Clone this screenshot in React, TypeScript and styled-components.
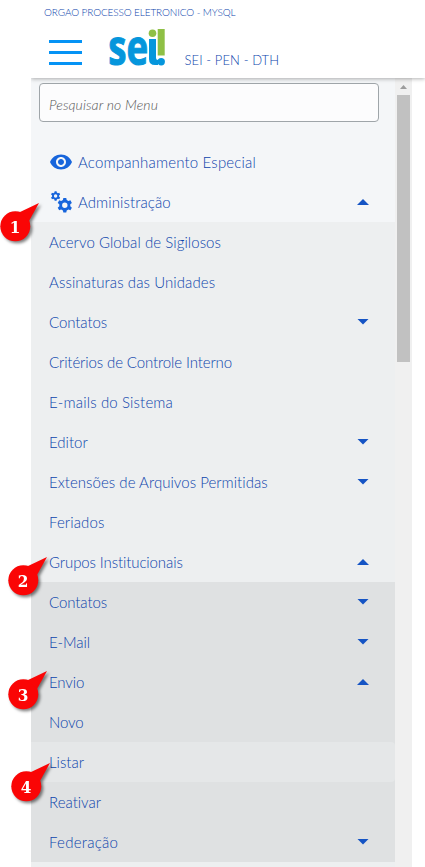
import React from "react";
import styled, { createGlobalStyle } from "styled-components";

const GlobalStyle = createGlobalStyle`
  *, *::before, *::after { box-sizing: border-box; }
  body { margin: 0; background: #fff; overflow: hidden; }
`;

const Page = styled.div`
  position: relative;
  display: flex;
  flex-direction: column;
  width: 425px;
  height: 867px;
  overflow: hidden;
  background: #fff;
  color: #0c44ac;
  font-family: Lato, "Open Sans", sans-serif;
  font-weight: 300;
  font-variant-ligatures: none;
`;

const Header = styled.header`
  position: relative;
  z-index: 1;
  flex: none;
  height: 78px;
  margin-left: 31px;
  padding: 5px 0 0 13px;
  background: #fff;
  box-shadow: 0 1px 4px rgba(0, 0, 0, 0.3);
  clip-path: inset(0 0 -6px 0);
`;

const Organization = styled.div`
  height: 14px;
  font-size: 10px;
  line-height: 14px;
  letter-spacing: -0.12px;
  white-space: nowrap;
`;

const Brand = styled.div`
  display: flex;
  align-items: flex-start;
  padding-left: 5px;
`;

const MenuButton = styled.button`
  display: flex;
  flex-direction: column;
  gap: 8px;
  width: 33px;
  margin-top: 21px;
  padding: 0;
  border: 0;
  background: none;

  span {
    height: 3px;
    background: #0593f5;
  }
`;

const Logo = styled.svg`
  width: 58px;
  height: 70px;
  margin: -7px 0 -14px 27px;
`;

const Unit = styled.span`
  margin: 32px 0 0 17.5px;
  font-size: 13px;
  line-height: 18px;
  letter-spacing: 0.1px;
  white-space: nowrap;
`;

const Body = styled.div`
  display: flex;
  flex: 1;
  min-height: 0;
  width: 381px;
  margin-left: 31px;
`;

const Sidebar = styled.nav`
  width: 364px;
  padding-top: 5px;
  background: #f4f6f8;
`;

const Search = styled.input`
  display: block;
  width: 340px;
  height: 39px;
  margin: 0 0 20px 8px;
  padding: 3px 9px 0;
  border: 1px solid #9fa5a9;
  border-radius: 4px;
  background: #fcfcfd;
  font: italic 300 14px Lato, sans-serif;
  letter-spacing: 0.1px;

  &::placeholder {
    color: #555;
    opacity: 1;
  }
`;

const SubMenu = styled.div<{ $level: 1 | 2 }>`
  background: ${({ $level }) => ($level === 1 ? "#edeff0" : "#dfe1e2")};
  ${({ $level }) => $level === 1 && "padding-bottom: 5px;"}
`;

const Item = styled.div<{ $active?: boolean }>`
  display: flex;
  align-items: center;
  height: 40px;
  padding: 0 26px 1px 18px;
  border-radius: ${({ $active }) => ($active ? "0 4px 4px 0" : "0")};
  background: ${({ $active }) => ($active ? "#e5e7e8" : "transparent")};
`;

const Label = styled.span<{ $spacing: number }>`
  flex: 1;
  font-size: 15px;
  line-height: 20px;
  letter-spacing: ${({ $spacing }) => $spacing}px;
  white-space: nowrap;
`;

const ItemIcon = styled.svg`
  flex: none;
  width: 24px;
  height: 24px;
  margin-right: 5px;
  fill: #1765dc;
`;

const Caret = styled.span<{ $open: boolean }>`
  width: 12px;
  height: 6px;
  margin-top: ${({ $open }) => ($open ? "1px" : "0")};
  background: #1554c4;
  clip-path: ${({ $open }) =>
    $open ? "polygon(50% 0, 100% 100%, 0 100%)" : "polygon(0 0, 100% 0, 50% 100%)"};
`;

const Scrollbar = styled.div`
  display: flex;
  flex-direction: column;
  align-items: center;
  width: 17px;
  background: #f0f0f0;
`;

const ScrollArrow = styled.div`
  width: 7px;
  height: 4px;
  margin: 7px 0 6px;
  background: #9c9c9c;
  clip-path: polygon(50% 0, 100% 100%, 0 100%);
`;

const ScrollThumb = styled.div`
  width: 13px;
  height: 267px;
  background: #c1c1c1;
`;

const Pin = styled.svg<{ $x: number; $y: number }>`
  position: absolute;
  z-index: 2;
  left: ${({ $x }) => $x - 40}px;
  top: ${({ $y }) => $y - 2}px;
  width: 50px;
  height: 50px;
  overflow: visible;
  filter: drop-shadow(2px 2px 1.5px rgba(0, 0, 0, 0.5));

  text {
    fill: #fff;
    font: bold 17px "DejaVu Serif Condensed", "DejaVu Serif", serif;
    font-stretch: condensed;
    text-anchor: middle;
  }
`;

type Entry = {
  text: string;
  spacing?: number;
  caret?: "open" | "closed";
  active?: boolean;
  icon?: React.ReactNode;
};

const gear = (cx: number, cy: number, r: number) => (
  <g transform={`translate(${cx} ${cy}) scale(${r / 10})`}>
    <path
      fillRule="evenodd"
      d="M-2-10H2L2.6-7.2 5-5.9 7.7-6.8 9.7-3.3 7.5-1.4V1.4L9.7 3.3 7.7 6.8 5 5.9 2.6 7.2 2 10H-2L-2.6 7.2-5 5.9-7.7 6.8-9.7 3.3-7.5 1.4V-1.4L-9.7-3.3-7.7-6.8-5-5.9-2.6-7.2ZM0-3.7A3.7 3.7 0 1 0 0 3.7 3.7 3.7 0 1 0 0-3.7Z"
    />
  </g>
);

const topItems: Entry[] = [
  {
    text: "Acompanhamento Especial",
    spacing: 0.18,
    icon: (
      <ItemIcon viewBox="0 0 24 24">
        <path d="M12 4.5C7 4.5 2.73 7.61 1 12c1.73 4.39 6 7.5 11 7.5s9.27-3.11 11-7.5c-1.73-4.39-6-7.5-11-7.5zM12 17c-2.76 0-5-2.24-5-5s2.24-5 5-5 5 2.24 5 5-2.24 5-5 5zm0-8c-1.66 0-3 1.34-3 3s1.34 3 3 3 3-1.34 3-3-1.34-3-3-3z" />
      </ItemIcon>
    ),
  },
  {
    text: "Administração",
    spacing: 0.1,
    caret: "open",
    icon: (
      <ItemIcon viewBox="0 0 24 24">
        {gear(6.6, 6, 4.7)}
        {gear(15.8, 15.3, 7.3)}
      </ItemIcon>
    ),
  },
];

const adminItems: Entry[] = [
  { text: "Acervo Global de Sigilosos", spacing: 0.07 },
  { text: "Assinaturas das Unidades", spacing: 0.1 },
  { text: "Contatos", spacing: -0.08, caret: "closed" },
  { text: "Critérios de Controle Interno", spacing: -0.11 },
  { text: "E-mails do Sistema", spacing: 0.15 },
  { text: "Editor", caret: "closed" },
  { text: "Extensões de Arquivos Permitidas", spacing: 0.04, caret: "closed" },
  { text: "Feriados", spacing: 0.1 },
  { text: "Grupos Institucionais", spacing: -0.1, caret: "open" },
];

const groupItems: Entry[] = [
  { text: "Contatos", spacing: -0.08, caret: "closed" },
  { text: "E-Mail", spacing: -0.08, caret: "closed" },
  { text: "Envio", spacing: -0.1, caret: "open" },
  { text: "Novo", spacing: -0.15 },
  { text: "Listar", active: true },
  { text: "Reativar" },
  { text: "Federação", spacing: 0.25, caret: "closed" },
];

const pins = [
  { x: 39, y: 203 },
  { x: 47, y: 557 },
  { x: 47, y: 671 },
  { x: 50, y: 763 },
];

const MenuItem = ({ entry }: { entry: Entry }) => (
  <Item $active={entry.active}>
    {entry.icon}
    <Label $spacing={entry.spacing ?? 0}>{entry.text}</Label>
    {entry.caret && <Caret $open={entry.caret === "open"} />}
  </Item>
);

export default function App() {
  return (
    <>
      <GlobalStyle />
      <Page>
        <Header>
          <Organization>ORGAO PROCESSO ELETRONICO - MYSQL</Organization>
          <Brand>
            <MenuButton aria-label="Menu">
              <span />
              <span />
              <span />
            </MenuButton>
            <Logo viewBox="0 -14 58 70">
              <text
                x="-0.7"
                y="39"
                fill="#0596dc"
                stroke="#0596dc"
                strokeWidth="1"
                fontFamily="Open Sans"
                fontWeight="700"
                fontSize="48"
                textLength="40"
                lengthAdjust="spacingAndGlyphs"
              >
                se
              </text>
              <path fill="#0596dc" d="M40 13h7v19q0 2 2 2v5h-3q-6 0-6-6z" />
              <circle cx="43.5" cy="7.3" r="3.8" fill="#8fc045" />
              <path fill="#8fc045" d="M48.7 3h7v26.5h-7z" />
              <circle cx="52.2" cy="35.7" r="3.7" fill="#0596dc" />
            </Logo>
            <Unit>SEI - PEN - DTH</Unit>
          </Brand>
        </Header>
        <Body>
          <Sidebar>
            <Search placeholder="Pesquisar no Menu" />
            {topItems.map((entry) => (
              <MenuItem key={entry.text} entry={entry} />
            ))}
            <SubMenu $level={1}>
              {adminItems.map((entry) => (
                <MenuItem key={entry.text} entry={entry} />
              ))}
              <SubMenu $level={2}>
                {groupItems.map((entry) => (
                  <MenuItem key={entry.text} entry={entry} />
                ))}
              </SubMenu>
            </SubMenu>
          </Sidebar>
          <Scrollbar>
            <ScrollArrow />
            <ScrollThumb />
          </Scrollbar>
        </Body>
        {pins.map((pin, i) => (
          <Pin key={i} $x={pin.x} $y={pin.y} viewBox="0 0 50 50">
            <circle cx="16.3" cy="25.3" r="15" fill="#fa0505" />
            <path fill="#fa0505" d="M40 2 20 11.5 30 20Z" />
            <text x="16" y="31.5">
              {i + 1}
            </text>
          </Pin>
        ))}
      </Page>
    </>
  );
}
